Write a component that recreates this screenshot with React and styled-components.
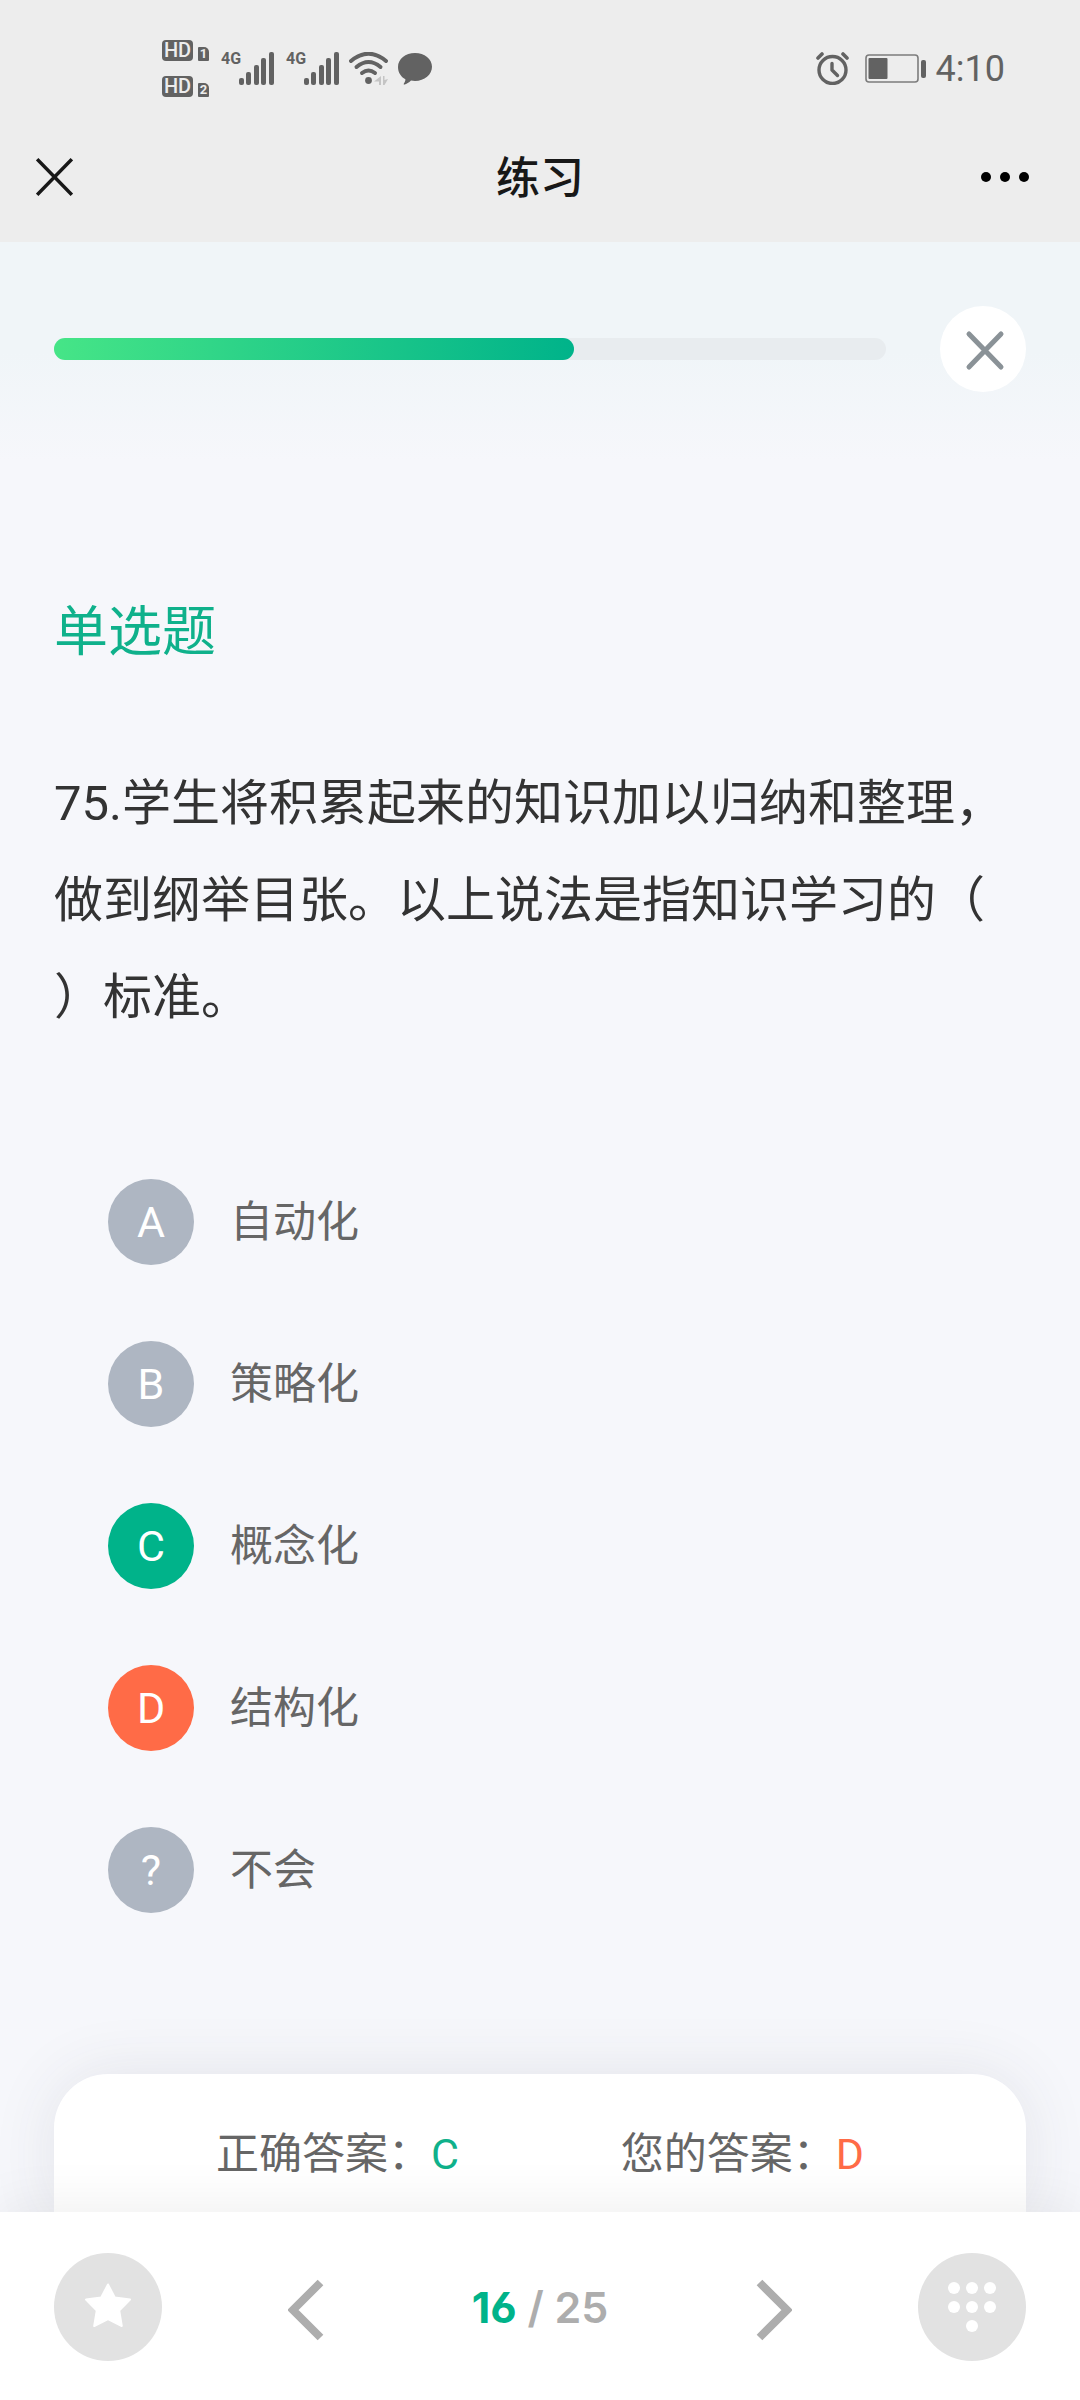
import React, { useState } from 'react';
import styled, { createGlobalStyle } from 'styled-components';

const GlobalStyle = createGlobalStyle`
  *,
  *::before,
  *::after {
    box-sizing: border-box;
  }

  body {
    margin: 0;
    background: #f6f7fb;
    font-family: Roboto, 'Noto Sans CJK SC', sans-serif;
    color: #333;
  }

  button {
    padding: 0;
    border: none;
    background: none;
    font: inherit;
    color: inherit;
    cursor: pointer;
  }

  svg {
    display: block;
  }
`;

const Page = styled.div`
  display: flex;
  flex-direction: column;
  min-height: 100vh;
`;

const TopArea = styled.header`
  background: #ededed;
`;

const StatusBar = styled.div`
  display: flex;
  align-items: center;
  justify-content: space-between;
  padding: 40px 75px 15px 162px;
  color: #626262;
`;

const StatusGroup = styled.div`
  display: flex;
  align-items: center;
  gap: ${({ $gap }) => $gap}px;
`;

const HdStack = styled.div`
  display: flex;
  flex-direction: column;
  gap: 15px;
  padding-right: 2px;
`;

const HdRow = styled.div`
  display: flex;
  align-items: flex-end;
  gap: 5px;
`;

const HdBadge = styled.span`
  width: 31px;
  height: 21px;
  border-radius: 4px;
  background: #626262;
  color: #ededed;
  font-size: 20px;
  font-weight: 500;
  line-height: 21px;
  text-align: center;
`;

const SimBadge = styled.span`
  width: 11px;
  height: 14px;
  border-radius: 1px 5px 1px 1px;
  background: #626262;
  color: #ededed;
  font-size: 13px;
  font-weight: 700;
  line-height: 14px;
  text-align: center;
`;

const Signal = styled.div`
  display: flex;
  align-items: flex-start;
`;

const Network = styled.span`
  width: 18px;
  font-family: 'Liberation Sans Narrow', Roboto, sans-serif;
  font-size: 16px;
  font-weight: 700;
  line-height: 14px;
`;

const Time = styled.span`
  font-size: 36px;
  line-height: 40px;
`;

const TitleBar = styled.div`
  display: grid;
  grid-template-columns: 1fr auto 1fr;
  align-items: center;
  height: 130px;
  padding: 0 36px;
`;

const Title = styled.h1`
  margin: 0;
  padding-top: 4px;
  font-size: 44px;
  font-weight: 500;
  line-height: 64px;
  color: #181818;
`;

const IconButton = styled.button`
  justify-self: ${({ $align }) => $align};
`;

const MoreButton = styled(IconButton)`
  padding-right: 15px;
`;

const Main = styled.main`
  display: flex;
  flex: 1;
  flex-direction: column;
  padding: 64px 54px 0;
  background: linear-gradient(#f0f5f8 0, #f0f5f8 110px, #f6f7fb 220px);
`;

const ProgressRow = styled.div`
  display: flex;
  align-items: center;
  gap: 54px;
`;

const Track = styled.div`
  flex: 1;
  height: 22px;
  border-radius: 11px;
  background: #e8ecef;
`;

const Fill = styled.div`
  height: 100%;
  border-radius: 11px;
  background: linear-gradient(to right, #46e587, #00b38a);
`;

const CloseButton = styled.button`
  display: grid;
  place-items: center;
  width: 86px;
  height: 86px;
  border-radius: 50%;
  background: #fff;
`;

const QuestionType = styled.h2`
  margin: 203px 0 84px;
  font-size: 54px;
  font-weight: 400;
  line-height: 76px;
  color: #0fb18b;
`;

const Question = styled.p`
  margin: 0;
  font-size: 49px;
  line-height: 97px;
  line-break: anywhere;
  text-spacing-trim: space-all;
`;

const Options = styled.div`
  display: flex;
  flex-direction: column;
  gap: 76px;
  margin: 133px 0 160px;
  padding: 0 54px;
`;

const Option = styled.label`
  display: flex;
  align-items: center;
  gap: 36px;
  font-size: 43px;
  line-height: 60px;
  color: #666;
  cursor: pointer;
`;

const Radio = styled.input.attrs({ type: 'radio' })`
  position: absolute;
  opacity: 0;
  pointer-events: none;
`;

const badgeColors = {
  idle: '#aeb6c2',
  right: '#00b38a',
  wrong: '#ff6b47',
};

const Badge = styled.span`
  width: 86px;
  height: 86px;
  border-radius: 50%;
  background: ${({ $state }) => badgeColors[$state]};
  color: #fff;
  line-height: 86px;
  text-align: center;
`;

const AnswerCard = styled.section`
  display: flex;
  justify-content: space-evenly;
  margin-top: auto;
  padding: 50px 0 28px;
  border-radius: 54px 54px 0 0;
  background: #fff;
  box-shadow: 0 0 64px rgba(60, 60, 80, 0.1);
  font-size: 43px;
  line-height: 60px;
  color: #666;
`;

const Answer = styled.span`
  color: ${({ $right }) => ($right ? '#0fb18b' : '#ff6b47')};
`;

const BottomBar = styled.footer`
  position: relative;
  display: flex;
  align-items: center;
  height: 188px;
  padding: 2px 54px 0;
  background: #fff;
  box-shadow: 0 0 54px rgba(0, 0, 0, 0.08);
`;

const RoundButton = styled.button`
  display: grid;
  place-items: center;
  width: 108px;
  height: 108px;
  border-radius: 50%;
  background: #e2e2e2;
`;

const StepButton = styled.button`
  display: grid;
  flex: 1;
  place-items: center;
  height: 108px;
  padding-top: 6px;
`;

const Counter = styled.div`
  width: 180px;
  font-family: Inter, sans-serif;
  font-size: 43px;
  font-weight: 600;
  font-feature-settings: 'ss01';
  line-height: 60px;
  text-align: center;
  white-space: nowrap;
  color: #adadad;
`;

const Current = styled.span`
  font-weight: 700;
  color: #00b38a;
`;

function SignalBars() {
  return (
    <svg width="35" height="33" viewBox="0 0 35 33" fill="currentColor">
      <rect x="0" y="26" width="5" height="7" rx="2" />
      <rect x="7" y="20" width="5" height="13" rx="2" />
      <rect x="15" y="13" width="5" height="20" rx="2" />
      <rect x="22" y="6" width="5" height="27" rx="2" />
      <rect x="30" y="0" width="5" height="33" rx="2" />
    </svg>
  );
}

function WifiIcon() {
  return (
    <svg width="39" height="33" viewBox="0 0 39 33" fill="none">
      <g stroke="#626262" strokeWidth="4" strokeLinecap="round">
        <path d="M2 9 Q19.500 -5.500 37 9" />
        <path d="M7.500 15 Q19.500 5 31.500 15" />
        <path d="M13 21 Q19.500 16 26 21" />
      </g>
      <circle cx="19.500" cy="28.500" r="3.400" fill="#626262" />
      <path d="M32 24v9h-2v-3.500h-5zM34 24v9h1.500l3.500-6-3.500 1v-4z" fill="#c4c4c4" />
    </svg>
  );
}

function BubbleIcon() {
  return (
    <svg width="34" height="32" viewBox="0 0 34 32" fill="currentColor">
      <path d="M17 0C26.500 0 34 6 34 13.800S26.500 28 17 28c-1.500 0-2.500-.1-4-.4-2 2-4.500 3.400-6.500 4-.8.200-1-.4-.6-1 .9-1.300 1.500-2.600 1.500-4.300C3 24 0 19.500 0 14 0 6 7.500 0 17 0z" />
    </svg>
  );
}

function AlarmIcon() {
  return (
    <svg width="33" height="33" viewBox="0 0 33 33" fill="none" stroke="currentColor" strokeLinecap="round">
      <circle cx="16.500" cy="18" r="13.500" strokeWidth="3.400" />
      <path d="M16 11.500v6.500l5.500 5.500" strokeWidth="3.400" strokeLinejoin="round" />
      <path d="M2 6l4-4M31 6l-4-4" strokeWidth="3.600" />
    </svg>
  );
}

function BatteryIcon() {
  return (
    <svg width="61" height="30" viewBox="0 0 61 30">
      <rect x="1" y="1" width="52" height="27" rx="3" fill="none" stroke="#7c7c7c" strokeWidth="1.600" />
      <rect x="3.500" y="4" width="19" height="21" rx="1" fill="#626262" />
      <rect x="56" y="6" width="5" height="18" rx="2" fill="#626262" />
    </svg>
  );
}

function Chevron({ right }) {
  return (
    <svg width="36" height="62" viewBox="0 0 36 62" fill="none" stroke="#adadad" strokeWidth="8">
      <path d={right ? 'M3.500 3.500L31 31L3.500 58.500' : 'M32.500 3.500L5 31l27.500 27.500'} />
    </svg>
  );
}

const OPTIONS = [
  { key: 'A', text: '自动化' },
  { key: 'B', text: '策略化' },
  { key: 'C', text: '概念化' },
  { key: 'D', text: '结构化' },
  { key: '?', text: '不会' },
];

const CORRECT = 'C';
const PROGRESS = 62.5;

const KEYPAD_DOTS = [
  [6, 6],
  [24, 6],
  [42, 6],
  [6, 25],
  [24, 25],
  [42, 25],
  [24, 44],
];

export default function App() {
  const [picked, setPicked] = useState('D');

  // The correct option is always green, a wrong pick turns red
  const getState = (key) => {
    if (key === CORRECT) return 'right';
    return key === picked ? 'wrong' : 'idle';
  };

  return (
    <Page>
      <GlobalStyle />
      <TopArea>
        <StatusBar>
          <StatusGroup $gap={10}>
            <HdStack>
              {[1, 2].map((sim) => (
                <HdRow key={sim}>
                  <HdBadge>HD</HdBadge>
                  <SimBadge>{sim}</SimBadge>
                </HdRow>
              ))}
            </HdStack>
            <StatusGroup $gap={12}>
              <Signal>
                <Network>4G</Network>
                <SignalBars />
              </Signal>
              <Signal>
                <Network>4G</Network>
                <SignalBars />
              </Signal>
            </StatusGroup>
            <WifiIcon />
            <BubbleIcon />
          </StatusGroup>
          <StatusGroup $gap={10}>
            <StatusGroup $gap={16}>
              <AlarmIcon />
              <BatteryIcon />
            </StatusGroup>
            <Time>4:10</Time>
          </StatusGroup>
        </StatusBar>
        <TitleBar>
          <IconButton $align="start" aria-label="关闭页面">
            <svg width="37" height="38" viewBox="0 0 37 38" stroke="#181818" strokeWidth="3.400">
              <path d="M1.200 1.200l34.600 35.600M35.800 1.200L1.200 36.800" />
            </svg>
          </IconButton>
          <Title>练习</Title>
          <MoreButton $align="end" aria-label="更多">
            <svg width="48" height="10" viewBox="0 0 48 10" fill="#000">
              <circle cx="5" cy="5" r="5" />
              <circle cx="24" cy="5" r="5" />
              <circle cx="43" cy="5" r="5" />
            </svg>
          </MoreButton>
        </TitleBar>
      </TopArea>

      <Main>
        <ProgressRow>
          <Track role="progressbar" aria-label="进度" aria-valuenow={PROGRESS}>
            <Fill style={{ width: `${PROGRESS}%` }} />
          </Track>
          <CloseButton aria-label="退出练习">
            <svg width="44" height="44" viewBox="0 0 44 44" stroke="#8a9297" strokeWidth="5" strokeLinecap="round">
              <path d="M8 7l32 33M40 7L8 40" />
            </svg>
          </CloseButton>
        </ProgressRow>

        <QuestionType>单选题</QuestionType>
        <Question>75.学生将积累起来的知识加以归纳和整理，做到纲举目张。以上说法是指知识学习的（ ）标准。</Question>

        <Options role="radiogroup" aria-label="单选题">
          {OPTIONS.map(({ key, text }) => (
            <Option key={key}>
              <Radio name="answer" value={key} checked={picked === key} onChange={() => setPicked(key)} />
              <Badge $state={getState(key)}>{key}</Badge>
              {text}
            </Option>
          ))}
        </Options>

        <AnswerCard>
          <div>
            正确答案：<Answer $right>{CORRECT}</Answer>
          </div>
          <div>
            您的答案：<Answer $right={picked === CORRECT}>{picked}</Answer>
          </div>
        </AnswerCard>
      </Main>

      <BottomBar>
        <RoundButton aria-label="收藏">
          <svg width="48" height="48" viewBox="0 0 48 48" fill="#fff" stroke="#fff" strokeWidth="2" strokeLinejoin="round">
            <path d="M24 1.500L30.800 14.500L46 16.600L35.200 27.500L37.800 43L24 36L10.200 43L12.800 27.500L2 16.600L17.200 14.500Z" />
          </svg>
        </RoundButton>
        <StepButton aria-label="上一题">
          <Chevron />
        </StepButton>
        <Counter>
          <Current>16</Current> / 25
        </Counter>
        <StepButton aria-label="下一题">
          <Chevron right />
        </StepButton>
        <RoundButton aria-label="答题卡">
          <svg width="48" height="50" viewBox="0 0 48 50" fill="#fff">
            {KEYPAD_DOTS.map(([cx, cy]) => (
              <circle key={`${cx}-${cy}`} cx={cx} cy={cy} r="6" />
            ))}
          </svg>
        </RoundButton>
      </BottomBar>
    </Page>
  );
}
